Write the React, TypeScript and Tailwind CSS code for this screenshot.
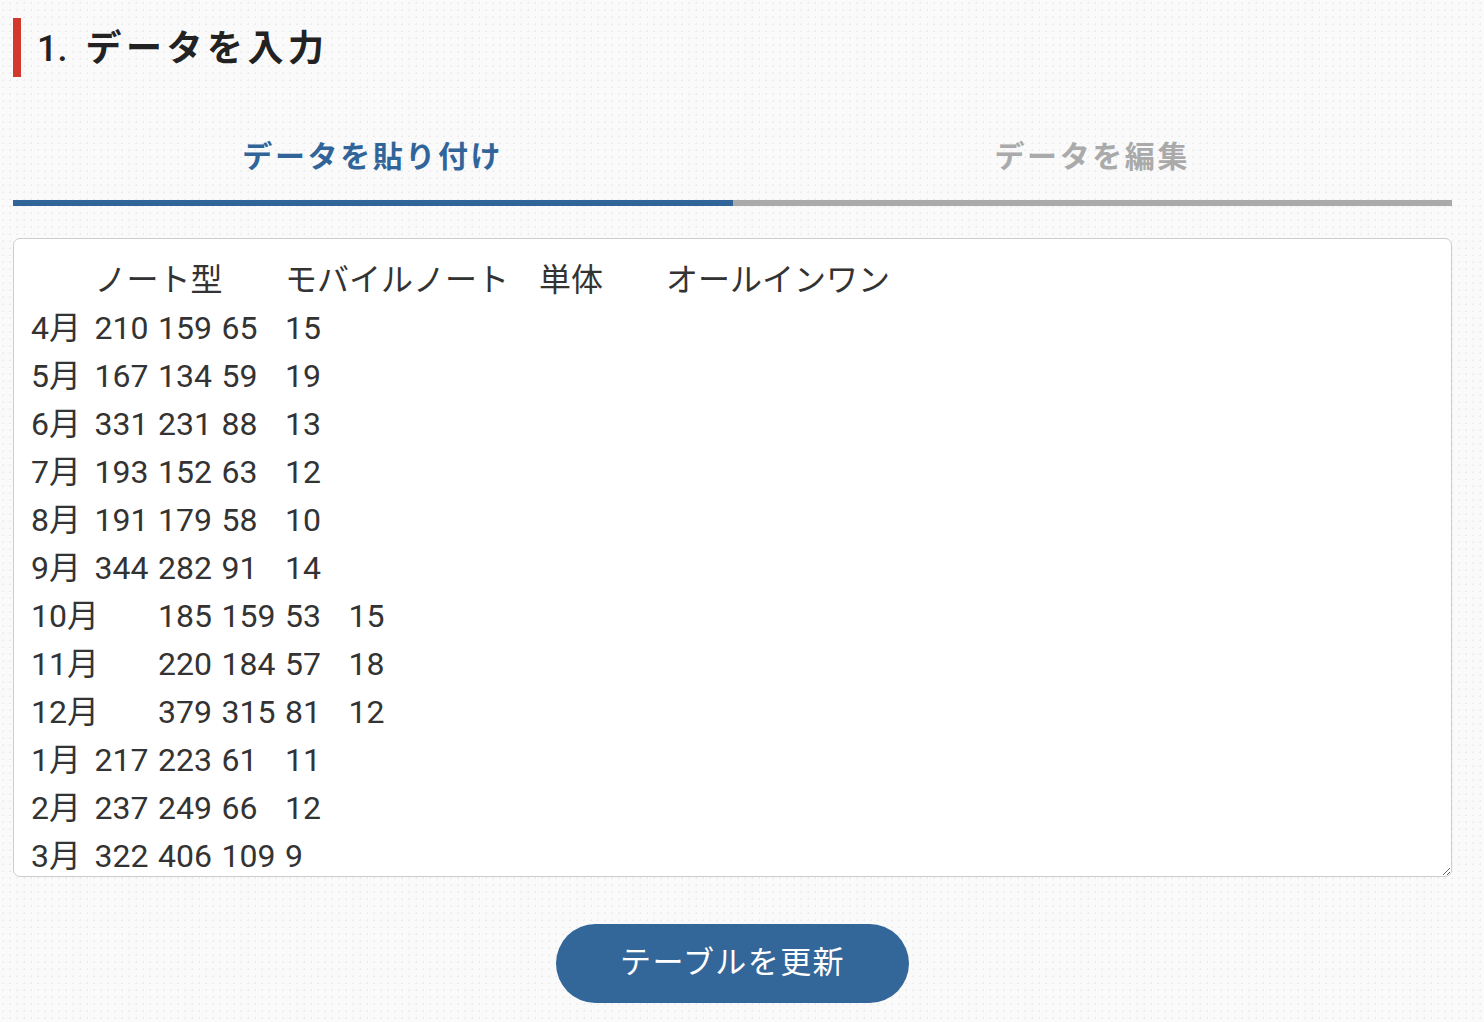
import React, { useState } from "react";

const sampleData = [
  "\tノート型\tモバイルノート\t単体\tオールインワン",
  "4月\t210\t159\t65\t15",
  "5月\t167\t134\t59\t19",
  "6月\t331\t231\t88\t13",
  "7月\t193\t152\t63\t12",
  "8月\t191\t179\t58\t10",
  "9月\t344\t282\t91\t14",
  "10月\t185\t159\t53\t15",
  "11月\t220\t184\t57\t18",
  "12月\t379\t315\t81\t12",
  "1月\t217\t223\t61\t11",
  "2月\t237\t249\t66\t12",
  "3月\t322\t406\t109\t9",
].join("\n");

export default function App() {
  const [activeTab, setActiveTab] = useState<"paste" | "edit">("paste");
  const [rawData, setRawData] = useState(sampleData);

  const tabClass = (isActive: boolean) =>
    `flex-1 pb-[21px] text-center text-[30px] leading-[45px] font-bold tracking-[2.6px] border-b-[6px] ${
      isActive ? "text-[#31659a] border-[#31659a]" : "text-[#aaaaaa] border-[#aaaaaa]"
    }`;

  return (
    <div
      className="min-h-screen bg-[#fafafa] bg-[radial-gradient(#ececec_1px,transparent_1px)] bg-[size:7px_7px] pt-[18px] pb-[20px] pl-[13px] pr-[32px] text-[#333]"
      style={{ fontFamily: 'Roboto, "Noto Sans CJK JP", sans-serif' }}
    >
      {/* section heading */}
      <div className="flex items-center h-[59px] border-l-[8px] border-[#d2382b] pl-[16px] pt-[3px]">
        <h2 className="text-[36px] leading-none font-bold text-[#222]">
          <span className="font-medium mr-[18px]">1.</span>
          <span className="tracking-[4.5px]">データを入力</span>
        </h2>
      </div>

      {/* tabs */}
      <div className="flex mt-[57px]">
        <button type="button" className={tabClass(activeTab === "paste")} onClick={() => setActiveTab("paste")}>
          データを貼り付け
        </button>
        <button type="button" className={tabClass(activeTab === "edit")} onClick={() => setActiveTab("edit")}>
          データを編集
        </button>
      </div>

      <textarea
        className="block w-full h-[639px] mt-[32px] bg-white border border-[#cccccc] rounded-[7px] pt-[17px] px-[17px] text-[32px] leading-[48px] text-[#333] outline-none overflow-hidden whitespace-pre"
        style={{ fontFamily: 'Roboto, "Noto Sans CJK JP", sans-serif', tabSize: 8 }}
        value={rawData}
        onChange={(e) => setRawData(e.target.value)}
        spellCheck={false}
      />

      <div className="flex justify-center mt-[47px]">
        <button
          type="button"
          className="w-[353px] h-[79px] rounded-full bg-[#336699] text-white text-[31px] tracking-[1.4px] hover:bg-[#2c5a87]"
        >
          テーブルを更新
        </button>
      </div>
    </div>
  );
}
